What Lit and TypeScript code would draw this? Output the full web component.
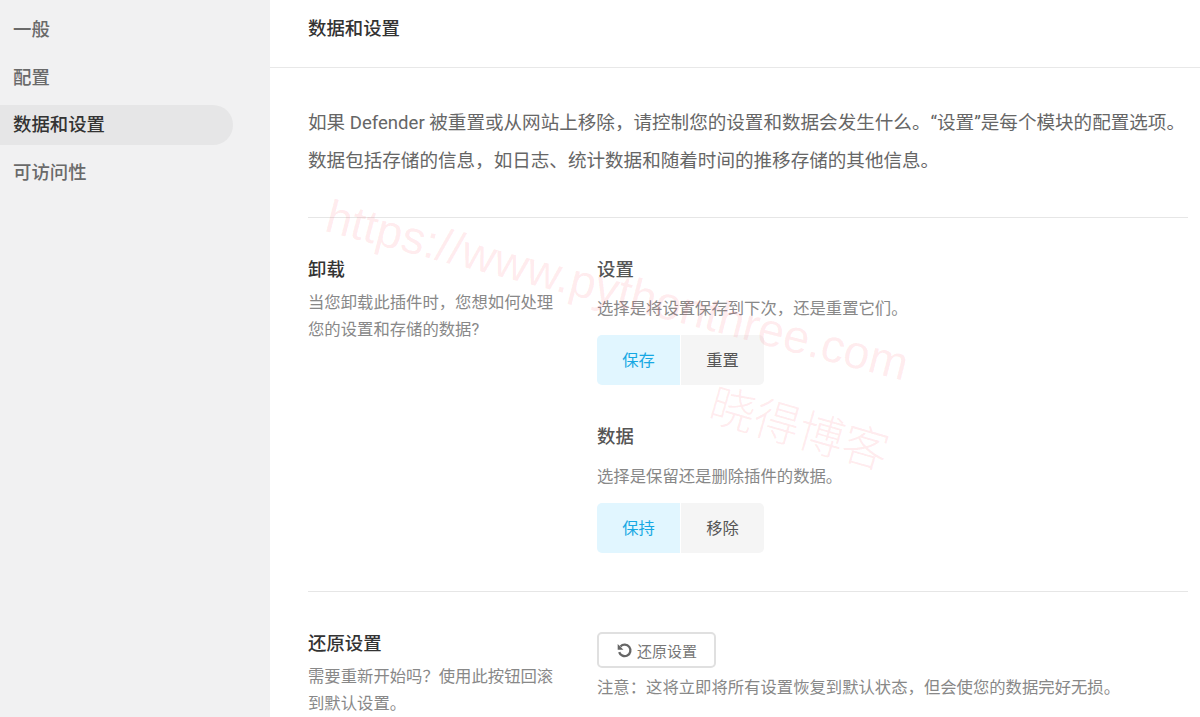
import { LitElement, html, css } from "lit";
import { customElement } from "lit/decorators.js";

@customElement("app-root")
export class AppRoot extends LitElement {
  static styles = css`
    :host {
      display: flex;
      width: 1200px;
      height: 717px;
      overflow: hidden;
      position: relative;
      background: #fff;
      font-family: Roboto, "Noto Sans CJK SC", sans-serif;
      color: #666;
    }
    .side {
      width: 270px;
      flex: none;
      background: #f1f1f2;
      padding-top: 10px;
      box-sizing: border-box;
    }
    .nav {
      width: 233px;
      height: 39.5px;
      margin-bottom: 8px;
      padding: 0 0 3px 13px;
      box-sizing: border-box;
      display: flex;
      align-items: center;
      font-size: 18.4px;
      font-weight: 500;
      color: #6a6a6a;
      border-radius: 0 20px 20px 0;
    }
    .nav.on {
      background: #e6e6e7;
      color: #333;
    }
    .main {
      flex: 1;
      min-width: 0;
    }
    .head {
      height: 68px;
      box-sizing: border-box;
      border-bottom: 1px solid #e8e8e8;
      padding: 17px 0 0 38px;
      font-size: 18.4px;
      font-weight: 500;
      color: #333;
      line-height: 24px;
    }
    .body {
      padding: 36px 12px 0 38px;
    }
    .intro {
      font-size: 18.57px;
      line-height: 38px;
      color: #666;
      padding-bottom: 37px;
      border-bottom: 1px solid #e6e6e6;
      white-space: nowrap;
    }
    .row {
      display: grid;
      grid-template-columns: 289px 1fr;
    }
    .row.a {
      padding: 40px 0 38px;
      border-bottom: 1px solid #e6e6e6;
    }
    .row.b {
      padding-top: 40px;
    }
    h3 {
      margin: 0;
      font-size: 18.4px;
      font-weight: 500;
      line-height: 24px;
      color: #333;
    }
    h4 {
      margin: 0;
      font-size: 18.4px;
      font-weight: 500;
      line-height: 24px;
      color: #555;
    }
    .desc {
      margin: 8px 0 0;
      font-size: 16.35px;
      line-height: 26.5px;
      color: #888;
      width: 250px;
    }
    .hint {
      margin: 14px 0 0;
      font-size: 16.35px;
      line-height: 26px;
      color: #888;
      white-space: nowrap;
    }
    .group + .group .hint {
      margin-top: 15px;
    }
    .btn + .hint {
      margin-top: 7px;
    }
    .seg {
      display: flex;
      gap: 1px;
      margin-top: 13px;
      width: 167px;
    }
    .seg span {
      flex: 1;
      height: 50px;
      padding-bottom: 3px;
      box-sizing: border-box;
      display: flex;
      align-items: center;
      justify-content: center;
      font-size: 16.3px;
      font-weight: 400;
      background: #f5f5f5;
      color: #555;
    }
    .seg span:first-child {
      border-radius: 5px 0 0 5px;
      background: #e1f6ff;
      color: #17a8e3;
    }
    .seg span:last-child {
      border-radius: 0 5px 5px 0;
    }
    .group + .group {
      margin-top: 40px;
    }
    .btn {
      width: 119px;
      height: 36px;
      box-sizing: border-box;
      border: 2px solid #e0e0e0;
      border-radius: 5px;
      display: flex;
      align-items: center;
      justify-content: center;
      gap: 4px;
      font-size: 15px;
      font-weight: 400;
      color: #777;
    }
    .btn svg {
      width: 17px;
      height: 17px;
      flex: none;
    }
    .mark {
      position: absolute;
      color: rgba(255, 60, 80, 0.1);
      white-space: nowrap;
      transform-origin: 0 0;
      line-height: 1;
      pointer-events: none;
    }
    .m1 {
      left: 333px;
      top: 193px;
      font-size: 46.7px;
      font-family: "Liberation Sans", Arial, sans-serif;
      transform: rotate(14.5deg);
    }
    .m2 {
      left: 718px;
      top: 378px;
      font-size: 46px;
      transform: rotate(16deg);
      font-family: "Noto Sans CJK SC", sans-serif;
      font-weight: 300;
    }
  `;

  render() {
    return html`
      <aside class="side">
        <div class="nav">一般</div>
        <div class="nav">配置</div>
        <div class="nav on">数据和设置</div>
        <div class="nav">可访问性</div>
      </aside>
      <main class="main">
        <div class="head">数据和设置</div>
        <div class="body">
          <div class="intro">
            如果 Defender 被重置或从网站上移除，请控制您的设置和数据会发生什么。“设置”是每个模块的配置选项。<br />
            数据包括存储的信息，如日志、统计数据和随着时间的推移存储的其他信息。
          </div>
          <section class="row a">
            <div>
              <h3>卸载</h3>
              <p class="desc">当您卸载此插件时，您想如何处理您的设置和存储的数据?</p>
            </div>
            <div>
              <div class="group">
                <h4>设置</h4>
                <p class="hint">选择是将设置保存到下次，还是重置它们。</p>
                <div class="seg"><span>保存</span><span>重置</span></div>
              </div>
              <div class="group">
                <h4>数据</h4>
                <p class="hint">选择是保留还是删除插件的数据。</p>
                <div class="seg"><span>保持</span><span>移除</span></div>
              </div>
            </div>
          </section>
          <section class="row b">
            <div>
              <h3>还原设置</h3>
              <p class="desc">需要重新开始吗？使用此按钮回滚到默认设置。</p>
            </div>
            <div>
              <div class="btn">
                <svg viewBox="0 0 16 16" fill="none" stroke="#666" stroke-width="2.2">
                  <path d="M4.2 4.2A5.4 5.4 0 1 1 3 9.5" />
                  <path d="M1.6 1.8v5.4h5.4z" fill="#666" stroke="none" />
                </svg>
                还原设置
              </div>
              <p class="hint">注意：这将立即将所有设置恢复到默认状态，但会使您的数据完好无损。</p>
            </div>
          </section>
        </div>
      </main>
      <div class="mark m1">https://www.pythonthree.com</div>
      <div class="mark m2">晓得博客</div>
    `;
  }
}
